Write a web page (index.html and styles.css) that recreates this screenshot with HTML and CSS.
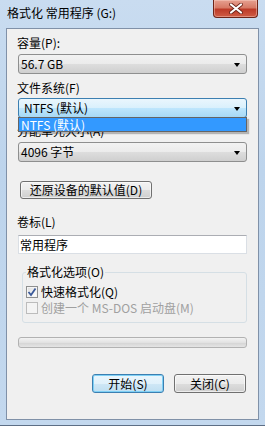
FILE: index.html
```html
<!DOCTYPE html>
<html lang="zh-CN">
<head>
<meta charset="utf-8">
<title>格式化 常用程序 (G:)</title>
<link rel="stylesheet" href="styles.css">
</head>
<body>
<div class="window">
  <div class="titlebar">
    <span class="title">格式化 常用程序 (G:)</span>
    <div class="close-btn">
      <svg width="16" height="11" viewBox="0 0 16 11">
        <path d="M3 1.5 L13 9.5 M13 1.5 L3 9.5" stroke="#6a2218" stroke-width="3.8" stroke-linecap="round"/>
        <path d="M3 1.5 L13 9.5 M13 1.5 L3 9.5" stroke="#ffffff" stroke-width="2.2" stroke-linecap="round"/>
      </svg>
    </div>
  </div>
  <div class="panel">
    <div class="label l1">容量(P):</div>
    <div class="combo"><span class="combo-text">56.7 GB</span><span class="arrow"></span></div>

    <div class="label l2">文件系统(F)</div>
    <div class="combo-wrap">
      <div class="combo combo-active"><span class="combo-text ind">NTFS (默认)</span><span class="arrow"></span></div>
      <div class="dropdown"><div class="dd-item">NTFS (默认)</div></div>
    </div>

    <div class="label l3">分配单元大小(A)</div>
    <div class="combo"><span class="combo-text">4096 字节</span><span class="arrow"></span></div>

    <div class="btn btn-restore">还原设备的默认值(D)</div>

    <div class="label l4">卷标(L)</div>
    <div class="textbox">常用程序</div>

    <div class="group">
      <span class="group-label">格式化选项(O)</span>
      <div class="check-row">
        <span class="checkbox checked">
          <svg width="10" height="10" viewBox="0 0 10 10"><path d="M1.5 5 L4 8 L8.5 1.5" fill="none" stroke="#3b5a9a" stroke-width="1.8"/></svg>
        </span>
        <span class="check-label">快速格式化(Q)</span>
      </div>
      <div class="check-row disabled">
        <span class="checkbox"></span>
        <span class="check-label">创建一个 MS-DOS 启动盘(M)</span>
      </div>
    </div>

    <div class="progress"></div>

    <div class="actions">
      <div class="btn btn-default">开始(S)</div>
      <div class="btn">关闭(C)</div>
    </div>
  </div>
</div>
</body>
</html>
```

FILE: styles.css
```css
* { box-sizing: border-box; }
html, body { margin: 0; padding: 0; }
body {
  font-family: "Noto Sans CJK SC", "Noto Sans", sans-serif;
  font-size: 12px;
  color: #000;
  background: #b9d1ea;
}
.window {
  width: 265px;
  height: 426px;
  display: flex;
  flex-direction: column;
  background: linear-gradient(180deg, #c9dcf0 0%, #bdd4ec 40%, #c3d8ee 100%);
  border-bottom: 1px solid #5d6e85;
}
.titlebar {
  height: 28px;
  display: flex;
  align-items: flex-start;
  flex: none;
}
.title {
  margin-left: 7px;
  margin-top: 6px;
  line-height: 14px;
  font-size: 12px;
  color: #000;
}
.close-btn {
  margin-left: auto;
  margin-right: 7px;
  width: 45px;
  height: 18px;
  border: 1px solid #6e2418;
  border-top: none;
  border-radius: 0 0 4px 4px;
  background: linear-gradient(180deg, #e6a090 0%, #d77a66 45%, #bd3b28 55%, #cf5c45 100%);
  box-shadow: inset 0 0 0 1px rgba(255,220,210,0.4);
  display: flex;
  align-items: center;
  justify-content: center;
}
.panel {
  flex: 1;
  margin: 0 6px 5px 6px;
  background: #f0f0f0;
  border: 1px solid #8091a8;
  padding: 0 11px;
  display: flex;
  flex-direction: column;
}
.label {
  line-height: 14px;
  height: 14px;
  margin-left: -1px;
  white-space: nowrap;
}
.l1 { margin-top: 7px; }
.l2 { margin-top: 7px; }
.l3 { margin-top: 6px; }
.l4 { margin-top: 16px; }
.combo {
  height: 20px;
  margin-top: 4px;
  border: 1px solid #8e8f8f;
  border-radius: 3px;
  background: linear-gradient(180deg, #f2f2f2 0%, #ebebeb 50%, #dddddd 51%, #cfcfcf 100%);
  display: flex;
  align-items: center;
  padding: 0 6px 0 2px;
}
.combo-wrap { position: relative; margin-top: 3px; }
.combo-wrap .combo { margin-top: 0; }
.l3 + .combo { margin-top: 4px; }
.combo-active {
  border-color: #3c7fb1;
  background: linear-gradient(180deg, #eaf6fd 0%, #d9f0fc 50%, #bee6fd 51%, #a7d9f5 100%);
}
.combo-text { flex: 1; line-height: 14px; white-space: nowrap; }
.combo-text.ind { padding-left: 3px; }
.arrow {
  width: 0;
  height: 0;
  border-left: 3.5px solid transparent;
  border-right: 3.5px solid transparent;
  border-top: 4px solid #000;
  margin-top: 1px;
}
.dropdown {
  position: absolute;
  left: 0;
  top: 19px;
  width: 229px;
  height: 15px;
  border: 1px solid #646464;
  background: #fff;
  box-shadow: 2px 2px 1px rgba(0,0,0,0.25);
  z-index: 2;
}
.dd-item {
  height: 13px;
  background: #3399ff;
  color: #fff;
  line-height: 13px;
  padding-left: 2px;
  white-space: nowrap;
}
.btn {
  height: 19px;
  border: 1px solid #707070;
  border-radius: 3px;
  background: linear-gradient(180deg, #f2f2f2 0%, #ebebeb 50%, #dddddd 51%, #cfcfcf 100%);
  box-shadow: inset 0 0 0 1px rgba(255,255,255,0.6);
  display: flex;
  align-items: center;
  justify-content: center;
  line-height: 14px;
  white-space: nowrap;
}
.btn-restore {
  margin-top: 19px;
  margin-left: 2px;
  width: 132px;
  height: 18px;
}
.textbox {
  margin-top: 6px;
  height: 19px;
  background: #fff;
  border: 1px solid #dadfe5;
  border-top-color: #abadb3;
  line-height: 17px;
  padding-left: 1px;
}
.group {
  position: relative;
  margin-top: 18px;
  margin-left: 4px;
  height: 51px;
  border: 1px solid #d5dfe5;
  border-radius: 3px;
  padding: 12px 0 0 3px;
  display: flex;
  flex-direction: column;
  gap: 2px;
}
.group-label {
  position: absolute;
  left: 3px;
  top: -8px;
  background: #f0f0f0;
  padding: 0 1px;
  line-height: 14px;
}
.check-row {
  display: flex;
  align-items: center;
  height: 14px;
  gap: 3px;
}
.checkbox {
  width: 12px;
  height: 12px;
  border: 1px solid #8e8f8f;
  background: linear-gradient(135deg, #dcdcdc 0%, #f4f4f4 60%, #ffffff 100%);
  display: flex;
  align-items: center;
  justify-content: center;
  box-shadow: inset 0 0 0 1px #f4f4f4;
}
.disabled .checkbox {
  border-color: #bcbcbc;
  background: #f4f4f4;
}
.disabled .check-label { color: #a0a0a0; }
.check-label { line-height: 14px; white-space: nowrap; }
.progress {
  margin-top: 14px;
  height: 11px;
  border: 1px solid #b2b2b2;
  border-radius: 3px;
  background: linear-gradient(180deg, #f3f3f3 0%, #e2e2e2 50%, #d4d4d4 51%, #e4e4e4 100%);
}
.actions {
  margin-top: 26px;
  display: flex;
  justify-content: flex-end;
  gap: 10px;
  margin-right: 1px;
}
.actions .btn { width: 72px; }
.btn-default {
  border-color: #3c7fb1;
  box-shadow: inset 0 0 0 1px #7fd0f5;
  background: linear-gradient(180deg, #eaf6fd 0%, #e0f1fb 50%, #cfe7f6 51%, #bfdff2 100%);
}
```
